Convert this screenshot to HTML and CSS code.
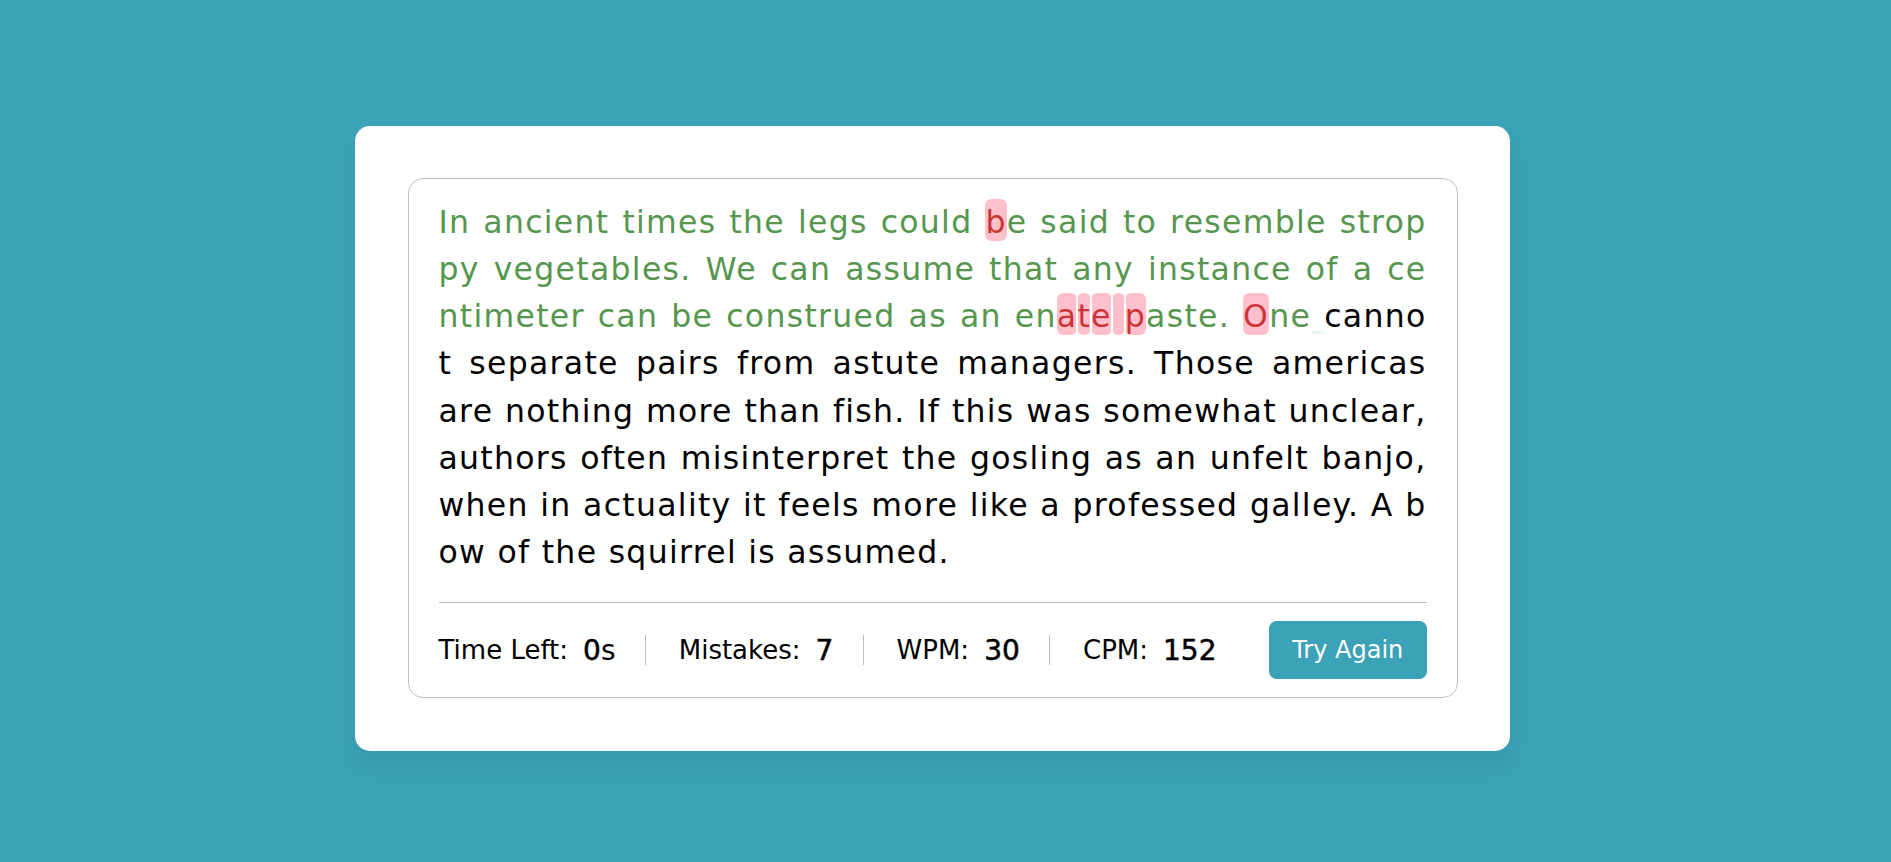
FILE: index.html
```html
<!DOCTYPE html>
<html lang="en">
<head>
<meta charset="utf-8">
<title>Typing Speed Test</title>
<link rel="stylesheet" href="styles.css">
</head>
<body>
<div class="wrapper">
  <div class="content-box">
    <div class="typing-text">
      <div class="line"><span class="correct">In ancient times the legs could </span><span class="incorrect">b</span><span class="correct">e said to resemble strop</span></div>
      <div class="line"><span class="correct">py vegetables. We can assume that any instance of a ce</span></div>
      <div class="line"><span class="correct">ntimeter can be construed as an en</span><span class="incorrect">a</span><span class="incorrect">t</span><span class="incorrect">e</span><span class="incorrect"> </span><span class="incorrect">p</span><span class="correct">aste. </span><span class="incorrect">O</span><span class="correct">ne</span><span class="active"> </span>canno</div>
      <div class="line">t separate pairs from astute managers. Those americas</div>
      <div class="line">are nothing more than fish. If this was somewhat unclear,</div>
      <div class="line">authors often misinterpret the gosling as an unfelt banjo,</div>
      <div class="line">when in actuality it feels more like a professed galley. A b</div>
      <div class="line last">ow of the squirrel is assumed.</div>
    </div>
    <div class="content">
      <ul class="result-details">
        <li><p>Time Left:</p><span><b>0</b>s</span></li>
        <li><p>Mistakes:</p><span><b>7</b></span></li>
        <li><p>WPM:</p><span><b>30</b></span></li>
        <li><p>CPM:</p><span><b>152</b></span></li>
      </ul>
      <button class="btn">Try Again</button>
    </div>
  </div>
</div>
</body>
</html>
```
FILE: styles.css
```css
*{margin:0;padding:0;box-sizing:border-box;}
body{
  font-family:"DejaVu Sans","Noto Sans",sans-serif;
  min-height:100vh;
  display:flex;
  align-items:center;
  justify-content:center;
  padding:14px 26px 0 0;
  background:#3ba2b8;
}
.wrapper{
  width:1155px;
  padding:52.5px;
  background:#fff;
  border-radius:15px;
  box-shadow:0 15px 22px rgba(0,0,0,0.05);
}
.content-box{
  padding:19.5px 30px 0;
  border-radius:15px;
  border:1px solid #bfbfbf;
}
.typing-text{
  font-size:31.5px;
  line-height:47.25px;
  letter-spacing:1.3px;
  color:#000;
}
.line{
  text-align:justify;
  text-align-last:justify;
  white-space:nowrap;
}
.line.last{text-align-last:left;}
.correct{color:#56964f;}
.incorrect{
  color:#cb3439;
  background:#ffc0cb;
  border-radius:6px;
  outline:1.5px solid #fff;
  padding:5px 0 1px;
}
.active{position:relative;}
.active::before{
  content:"";
  position:absolute;
  left:0;
  bottom:0;
  width:100%;
  height:3px;
  border-radius:7px;
  background:#17a2b8;
  opacity:0.1;
}
.content{
  margin-top:25.5px;
  display:flex;
  align-items:center;
  justify-content:space-between;
  padding:18px 0;
  border-top:1px solid #bfbfbf;
}
.result-details{
  display:flex;
  align-items:center;
  justify-content:space-between;
  width:calc(100% - 210px);
  list-style:none;
}
.result-details li{
  display:flex;
  align-items:center;
  height:30px;
}
.result-details li:not(:first-child){
  padding-left:33px;
  border-left:1px solid #bfbfbf;
}
.result-details li p{
  font-size:26px;
  color:#000;
}
.result-details li span{
  display:block;
  margin-left:15px;
  font-size:28px;
  color:#000;
}
.result-details li span b{
  font-weight:500;
  -webkit-text-stroke:0.5px #000;
}
.btn{
  width:157.5px;
  padding:12px 0;
  border:none;
  border-radius:7.5px;
  background:#3ba2b8;
  color:#fff;
  font-family:"DejaVu Sans","Noto Sans",sans-serif;
  font-size:24px;
  line-height:34px;
}
```
